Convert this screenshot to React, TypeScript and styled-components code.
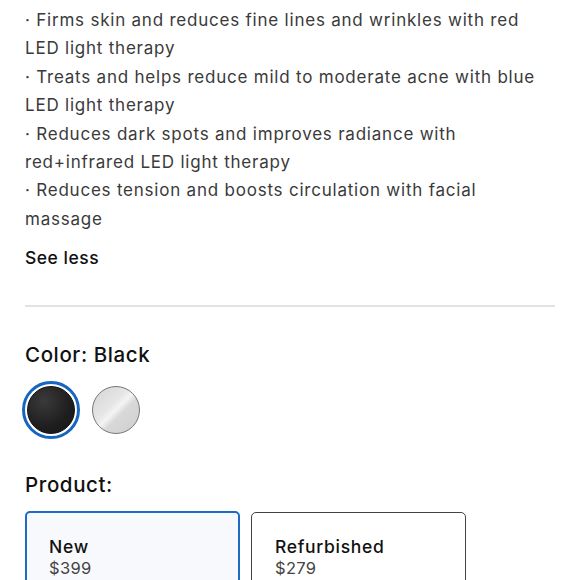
import React from "react";
import styled, { createGlobalStyle } from "styled-components";

const Global = createGlobalStyle`
  html, body { margin: 0; padding: 0; background: #fff; }
  body { font-family: Inter, "Noto Sans", sans-serif; color: #333; -webkit-font-smoothing: antialiased; }
`;

const Page = styled.div`
  padding: 6px 25px 0 25px;
  width: 530px;
`;

const Description = styled.div`
  font-size: 17px;
  line-height: 28.4px;
  letter-spacing: 0.78px;
  color: #3a3a3a;
`;

const Bullet = styled.div``;

const SeeLess = styled.button`
  display: block;
  margin-top: 11px;
  padding: 0;
  border: none;
  background: none;
  font-family: inherit;
  font-size: 17.5px;
  font-weight: 500;
  line-height: 28px;
  letter-spacing: 0.5px;
  color: #111;
  cursor: pointer;
`;

const Divider = styled.hr`
  margin: 33px 0 0 0;
  border: none;
  border-top: 2px solid #e2e2e2;
`;

const Heading = styled.div<{ $top: number }>`
  margin-top: ${(p) => p.$top}px;
  font-size: 20.5px;
  font-weight: 500;
  line-height: 28px;
  letter-spacing: 0.6px;
  color: #111;
`;

const Swatches = styled.div`
  display: flex;
  align-items: center;
  gap: 7px;
  margin-top: 12px;
  margin-left: -3px;
`;

const Swatch = styled.button<{ $selected?: boolean; $bg: string; $border: string }>`
  box-sizing: border-box;
  width: 58px;
  height: 58px;
  border-radius: 50%;
  padding: 0;
  border: 3px solid ${(p) => (p.$selected ? "#1466c0" : "transparent")};
  background: #fff;
  display: flex;
  align-items: center;
  justify-content: center;
  cursor: pointer;
  &::after {
    content: "";
    box-sizing: border-box;
    width: 48px;
    height: 48px;
    border-radius: 50%;
    background: ${(p) => p.$bg};
    border: 1px solid ${(p) => p.$border};
  }
`;

const Cards = styled.div`
  display: grid;
  grid-template-columns: 215px 215px;
  gap: 11px;
  margin-top: 12px;
`;

const Card = styled.button<{ $selected?: boolean }>`
  box-sizing: border-box;
  height: 110px;
  text-align: left;
  font-family: inherit;
  border-radius: 5px;
  border: ${(p) => (p.$selected ? "2.5px solid #1a6cc4" : "1.5px solid #444")};
  background: ${(p) => (p.$selected ? "#f7f9fd" : "#fff")};
  padding: ${(p) => (p.$selected ? "23px 22px" : "23px 23px")};
  display: flex;
  flex-direction: column;
  justify-content: flex-start;
  margin-top: ${(p) => (p.$selected ? "0" : "1px")};
  cursor: pointer;
`;

const CardTitle = styled.span`
  font-size: 17.5px;
  font-weight: 500;
  line-height: 22px;
  letter-spacing: 0.7px;
  color: #111;
`;

const CardPrice = styled.span`
  font-size: 16.5px;
  line-height: 20px;
  letter-spacing: 0.3px;
  color: #444;
`;

const bullets = [
  "Firms skin and reduces fine lines and wrinkles with red LED light therapy",
  "Treats and helps reduce mild to moderate acne with blue LED light therapy",
  "Reduces dark spots and improves radiance with red+infrared LED light therapy",
  "Reduces tension and boosts circulation with facial massage",
];

export default function App() {
  return (
    <>
      <Global />
      <Page>
        <Description>
          {bullets.map((b) => (
            <Bullet key={b}>{`· ${b}`}</Bullet>
          ))}
        </Description>
        <SeeLess>See less</SeeLess>
        <Divider />
        <Heading $top={34}>Color: Black</Heading>
        <Swatches>
          <Swatch
            $selected
            $bg="radial-gradient(circle at 35% 30%, #3a3a3a 0%, #1e1e1e 60%, #151515 100%)"
            $border="#111"
            aria-label="Black"
          />
          <Swatch
            $bg="linear-gradient(135deg, #d4d4d4 0%, #e6e6e6 40%, #f4f4f4 50%, #d8d8d8 60%, #cfcfcf 100%)"
            $border="#777"
            aria-label="Silver"
          />
        </Swatches>
        <Heading $top={32}>Product:</Heading>
        <Cards>
          <Card $selected>
            <CardTitle>New</CardTitle>
            <CardPrice>$399</CardPrice>
          </Card>
          <Card>
            <CardTitle>Refurbished</CardTitle>
            <CardPrice>$279</CardPrice>
          </Card>
        </Cards>
      </Page>
    </>
  );
}
